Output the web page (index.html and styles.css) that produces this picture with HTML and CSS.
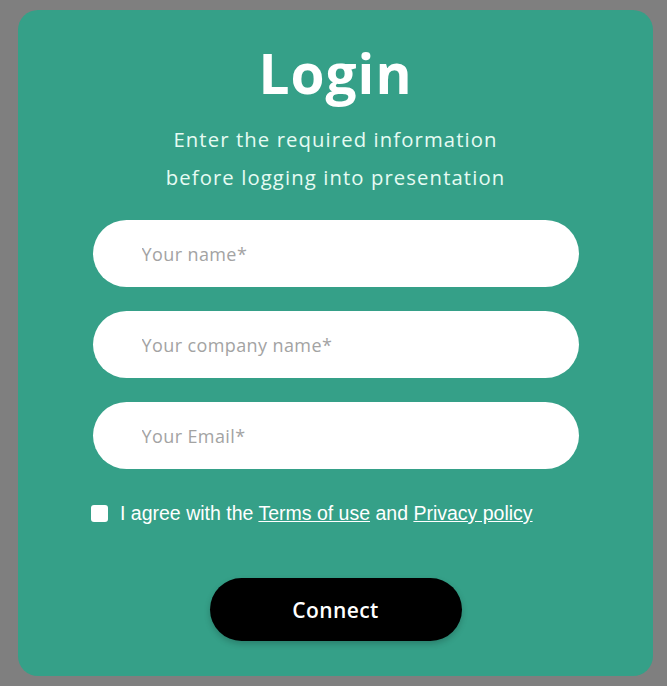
FILE: index.html
```html
<!DOCTYPE html>
<html lang="en">
<head>
<meta charset="utf-8">
<title>Login</title>
<link rel="stylesheet" href="styles.css">
</head>
<body>
<div class="overlay">
  <form class="card">
    <h1 class="title">Login</h1>
    <p class="subtitle">Enter the required information<br>before logging into presentation</p>
    <div class="fields">
      <input class="field" type="text" placeholder="Your name*">
      <input class="field" type="text" placeholder="Your company name*">
      <input class="field" type="email" placeholder="Your Email*">
    </div>
    <label class="agree">
      <span class="box"></span>
      <span class="agree-text">I agree with the <a href="#">Terms of use</a> and <a href="#">Privacy policy</a></span>
    </label>
    <button class="connect" type="button">Connect</button>
  </form>
</div>
</body>
</html>
```
FILE: styles.css
```css
html, body {
  margin: 0;
  padding: 0;
  background: #7f7f7f;
}
.overlay {
  width: 667px;
  height: 686px;
  padding: 10px 14px 10px 18px;
  box-sizing: border-box;
}
.card {
  box-sizing: border-box;
  width: 635px;
  height: 666px;
  background: #35a088;
  border-radius: 20px;
  display: flex;
  flex-direction: column;
  align-items: center;
  padding-top: 33px;
  font-family: "Open Sans", Lato, sans-serif;
}
.title {
  margin: 0;
  font-size: 55px;
  line-height: 60px;
  font-weight: 700;
  letter-spacing: 1px;
  color: #ffffff;
}
.subtitle {
  margin: 17px 0 0;
  font-size: 20.3px;
  line-height: 38px;
  font-weight: 400;
  letter-spacing: 1.1px;
  color: #e6fbf3;
  text-align: center;
}
.fields {
  margin-top: 24px;
  display: flex;
  flex-direction: column;
  gap: 24px;
}
.field {
  box-sizing: border-box;
  width: 486px;
  height: 67px;
  border: none;
  border-radius: 34px;
  background: #ffffff;
  padding: 0 0 0 49px;
  font-family: "Open Sans", sans-serif;
  font-size: 18px;
  letter-spacing: 0.4px;
  color: #333;
  outline: none;
}
.field::placeholder {
  color: #a3a3a3;
}
.agree {
  align-self: flex-start;
  margin: 33px 0 0 73px;
  display: flex;
  align-items: center;
  gap: 12px;
  font-family: "Liberation Sans", Arial, sans-serif;
  font-size: 19.5px;
  color: #ffffff;
}
.box {
  width: 17px;
  height: 17px;
  background: #ffffff;
  border-radius: 3px;
}
.agree-text a {
  color: #ffffff;
  text-decoration: underline;
}
.connect {
  margin-top: 53px;
  width: 252px;
  height: 63px;
  border: none;
  border-radius: 32px;
  background: #000000;
  color: #ffffff;
  font-family: "Open Sans", sans-serif;
  font-size: 21px;
  font-weight: 600;
  letter-spacing: 0.4px;
  box-shadow: 0 3px 6px rgba(0,0,0,0.2);
}
```
